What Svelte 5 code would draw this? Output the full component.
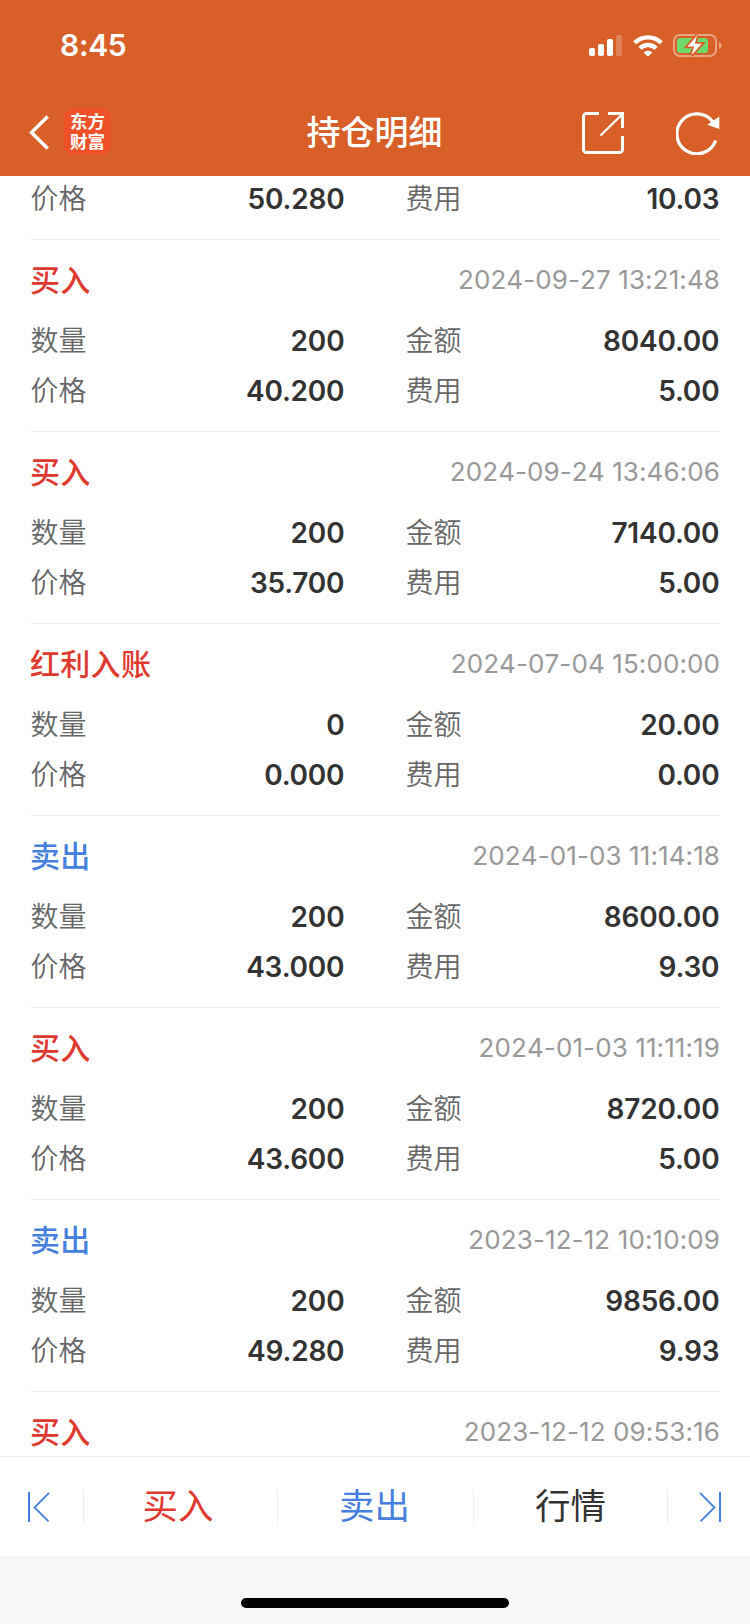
<script lang="ts">
  type RecordKind = "buy" | "sell" | "dividend";

  interface TradeRecord {
    kind?: RecordKind;
    time?: string;
    quantity?: string;
    amount?: string;
    price: string;
    fee: string;
  }

  const kindLabels: Record<RecordKind, string> = {
    buy: "买入",
    sell: "卖出",
    dividend: "红利入账",
  };

  // The first record is scrolled halfway under the header.
  const records: TradeRecord[] = [
    { price: "50.280", fee: "10.03" },
    { kind: "buy", time: "2024-09-27 13:21:48", quantity: "200", amount: "8040.00", price: "40.200", fee: "5.00" },
    { kind: "buy", time: "2024-09-24 13:46:06", quantity: "200", amount: "7140.00", price: "35.700", fee: "5.00" },
    { kind: "dividend", time: "2024-07-04 15:00:00", quantity: "0", amount: "20.00", price: "0.000", fee: "0.00" },
    { kind: "sell", time: "2024-01-03 11:14:18", quantity: "200", amount: "8600.00", price: "43.000", fee: "9.30" },
    { kind: "buy", time: "2024-01-03 11:11:19", quantity: "200", amount: "8720.00", price: "43.600", fee: "5.00" },
    { kind: "sell", time: "2023-12-12 10:10:09", quantity: "200", amount: "9856.00", price: "49.280", fee: "9.93" },
  ];
</script>

{#snippet pair(label: string, value: string)}
  <div class="pair">
    <span class="label">{label}</span>
    <span class="value">{value}</span>
  </div>
{/snippet}

{#snippet heading(kind: RecordKind, time: string)}
  <div class="record-head">
    <h2 class={kind}>{kindLabels[kind]}</h2>
    <time>{time}</time>
  </div>
{/snippet}

<div class="screen">
  <header>
    <div class="status-bar">
      <span class="clock">8:45</span>
      <div class="status-icons">
        <svg width="33" height="21" viewBox="0 0 33 21" fill="#fff">
          <rect x="0" y="13" width="6" height="8" rx="1.8" />
          <rect x="9" y="9" width="6" height="12" rx="1.8" />
          <rect x="18" y="4" width="6" height="17" rx="1.8" />
          <rect x="27" y="0" width="6" height="21" rx="1.8" opacity=".22" />
        </svg>
        <svg class="wifi" width="30" height="22" viewBox="0 0 30 22" fill="none" stroke="#fff" stroke-width="4.400">
          <path d="M1.700 7.800a19 19 0 0 1 26.600 0" />
          <path d="M6.900 13.300a11.600 11.600 0 0 1 16.200 0" />
          <path d="M15 21.800l-4.300-4.300a6.300 6.300 0 0 1 8.600 0z" fill="#fff" stroke="none" />
        </svg>
        <svg class="battery" width="49" height="23" viewBox="0 0 49 23">
          <rect x="1" y="1" width="42" height="21" rx="6" fill="none" stroke="#e9a582" stroke-width="2" />
          <path d="M46 8v7c3.500-1.500 3.500-5.500 0-7z" fill="#e9a582" />
          <rect x="4" y="4" width="31" height="15" rx="3.300" fill="#6cd96a" />
          <path d="M24 1.500L14.500 12.500h6.700l-2.800 8.800L28.800 9.800h-6.900z" fill="#fff" stroke="#d85f28" stroke-width="3.600" paint-order="stroke" />
        </svg>
      </div>
    </div>

    <nav class="title-bar">
      <div class="nav-side">
        <svg class="back" width="21" height="36" viewBox="0 0 21 36" fill="none" stroke="#fff" stroke-width="3.600">
          <path d="M18.700 1.500L2.500 17.500l16.200 16" />
        </svg>
        <span class="brand"><span>东方</span><span>财富</span></span>
      </div>
      <h1>持仓明细</h1>
      <div class="nav-side actions">
        <svg width="42" height="42" viewBox="0 0 42 42" fill="none" stroke="#fff" stroke-width="3">
          <path d="M17 1.500H4.500a3 3 0 0 0-3 3v33a3 3 0 0 0 3 3h33a3 3 0 0 0 3-3V24" />
          <path d="M26 1.500h14.500V16" />
          <path d="M39.500 3L18.500 23.500" stroke-width="2.300" />
        </svg>
        <svg width="44" height="44" viewBox="0 0 44 44" fill="none">
          <path d="M37 11A20 20 0 1 0 39.700 29.500" stroke="#fff" stroke-width="3.300" />
          <path d="M43.300 5.500V18l-12-4.200z" fill="#fff" />
        </svg>
      </div>
    </nav>
  </header>

  <main>
    {#each records as record}
      <section class="record" class:partial={!record.kind}>
        {#if record.kind && record.time}
          {@render heading(record.kind, record.time)}
        {/if}
        <div class="details">
          {#if record.quantity && record.amount}
            {@render pair("数量", record.quantity)}
            {@render pair("金额", record.amount)}
          {/if}
          {@render pair("价格", record.price)}
          {@render pair("费用", record.fee)}
        </div>
      </section>
    {/each}
    <section class="record">
      {@render heading("buy", "2023-12-12 09:53:16")}
    </section>
  </main>

  <footer>
    <button class="step" aria-label="上一个">
      <svg width="22" height="30" viewBox="0 0 22 30" fill="none" stroke="#4680df">
        <path d="M1 0v30" stroke-width="2" />
        <path d="M21 .8L6.500 15.500 20.500 29.300" stroke-width="1.800" />
      </svg>
    </button>
    <button class="buy">买入</button>
    <button class="sell">卖出</button>
    <button>行情</button>
    <button class="step" aria-label="下一个">
      <svg width="22" height="30" viewBox="0 0 22 30" fill="none" stroke="#4680df">
        <path d="M21 0v30" stroke-width="2" />
        <path d="M1 .8L15.500 15.500 1.500 29.300" stroke-width="1.800" />
      </svg>
    </button>
  </footer>
  <div class="home-area">
    <div class="home-indicator"></div>
  </div>
</div>

<style>
  :global(body) {
    background: #fff;
  }

  .screen {
    --red: #df3a2f;
    --blue: #4680df;
    --line: #ececec;
    color: #333;
    display: flex;
    flex-direction: column;
    font-family: Inter, "Noto Sans CJK SC", sans-serif;
    height: 1624px;
    overflow: hidden;
    width: 750px;
  }

  svg {
    display: block;
    flex: none;
  }

  header {
    background: #d85f28;
    color: #fff;
    flex: none;
    height: 176px;
  }

  .status-bar {
    align-items: center;
    box-sizing: border-box;
    display: flex;
    height: 88px;
    justify-content: space-between;
    padding: 3px 28px 0 60px;
  }

  .clock {
    font-size: 30px;
    font-weight: 600;
    letter-spacing: -0.3px;
    line-height: 36px;
    padding-bottom: 1px;
  }

  .status-icons {
    align-items: center;
    display: flex;
  }

  .wifi {
    margin-left: 11px;
  }

  .battery {
    margin-left: 10px;
  }

  .title-bar {
    align-items: center;
    box-sizing: border-box;
    display: flex;
    height: 88px;
    justify-content: space-between;
    padding: 2px 30px 0 29px;
  }

  .nav-side {
    align-items: center;
    display: flex;
    gap: 14px;
    width: 200px;
  }

  .actions {
    gap: 52px;
    justify-content: flex-end;
  }

  .brand {
    align-items: center;
    background: #ee5028;
    border-radius: 10px;
    display: flex;
    flex-direction: column;
    font-size: 17.500px;
    font-weight: 700;
    height: 47px;
    justify-content: center;
    line-height: 20px;
    margin-bottom: 3px;
    width: 47px;
  }

  h1 {
    font-size: 34px;
    font-weight: 500;
    line-height: 48px;
    margin: 0;
  }

  main {
    flex: 1;
    min-height: 0;
    overflow: hidden;
    padding: 0 30px;
  }

  .record {
    border-top: 1px solid var(--line);
    padding: 17px 0 16px;
  }

  .record.partial {
    border-top: 0;
    margin-top: -3px;
    padding-top: 0;
  }

  .record-head {
    align-items: center;
    display: flex;
    height: 48px;
    justify-content: space-between;
    margin-bottom: 10px;
  }

  h2 {
    font-size: 30px;
    font-weight: 500;
    letter-spacing: 0.3px;
    line-height: 46px;
    margin: 0;
    padding-bottom: 2px;
  }

  time {
    color: #999;
    font-kerning: none;
    font-size: 26px;
    letter-spacing: 0.1px;
    padding-bottom: 3px;
  }

  .details {
    column-gap: 60px;
    display: grid;
    grid-template-columns: 315px 315px;
  }

  .pair {
    align-items: center;
    display: flex;
    height: 50px;
    justify-content: space-between;
  }

  .label {
    color: #666;
    font-size: 28px;
    font-weight: 350;
    padding: 0 0 2px 0.5px;
  }

  .value {
    font-size: 28px;
    font-weight: 600;
    letter-spacing: -0.2px;
    padding: 1px 0.600px 0 0;
  }

  .buy,
  .dividend {
    color: var(--red);
  }

  .sell {
    color: var(--blue);
  }

  footer {
    align-items: center;
    border-top: 1px solid var(--line);
    box-sizing: border-box;
    display: grid;
    flex: none;
    grid-template-columns: 84px 194px 196px 194px 82px;
    height: 100px;
  }

  footer button {
    align-items: center;
    background: none;
    border: 0;
    border-right: 1px solid var(--line);
    display: flex;
    font-family: inherit;
    font-size: 35.500px;
    height: 34px;
    justify-content: center;
    line-height: 34px;
    padding: 0 2px 0 0;
  }

  footer .buy {
    padding-right: 5px;
  }

  footer button:not(.buy):not(.sell) {
    color: #333;
  }

  footer button:nth-child(4) {
    padding-right: 0;
  }

  footer button:last-child {
    border-right: 0;
  }

  .step:first-child {
    padding-right: 6px;
  }

  .step:last-child {
    padding-left: 3px;
  }

  .home-area {
    background: #f6f7f9;
    display: flex;
    flex: none;
    height: 68px;
    justify-content: center;
  }

  .home-indicator {
    background: #000;
    border-radius: 5px;
    height: 10px;
    margin-top: 42px;
    width: 268px;
  }
</style>
